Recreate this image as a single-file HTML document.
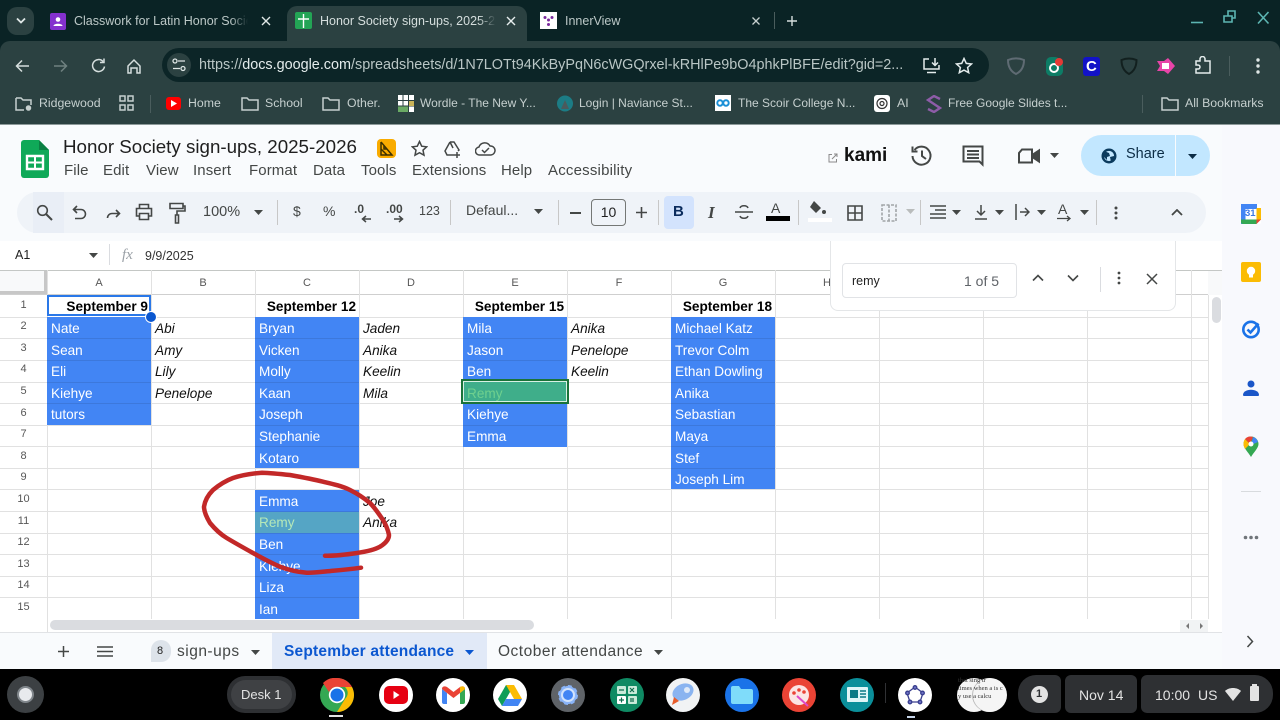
<!DOCTYPE html>
<html lang="en"><head><meta charset="utf-8"><title>Honor Society sign-ups</title>
<style>
html,body{margin:0;padding:0;width:1280px;height:720px;overflow:hidden;background:#f9fbfd;font-family:"Liberation Sans",sans-serif}
div,span,svg{position:absolute}
.t{white-space:nowrap;line-height:1}
.b{color:#c6d0cf;font-size:12.3px}
.m{color:#444746;font-size:15px;top:163px;letter-spacing:.1px}
.c{width:100px;height:21.6px;line-height:23px;font-size:13.6px;color:#000;white-space:nowrap;padding-left:4px}
.w{color:#fff}.i{font-style:italic;color:#111}
.h{font-weight:bold;text-align:right;padding:0;width:99px}
.hd{color:#575757;font-size:11px;width:104px;text-align:center;top:278px}
.rn{color:#575757;font-size:11px;width:47px;text-align:center;left:0}
.ca{left:47px}.cb{left:151px}.cc{left:255px}.cd{left:359px}.ce{left:463px}.cf{left:567px}.cg{left:671px}
.r1{top:295.4px}.r2{top:317px}.r3{top:338.6px}.r4{top:360.2px}.r5{top:381.8px}.r6{top:403.4px}.r7{top:425px}.r8{top:446.6px}.r9{top:468.2px}.r10{top:489.8px}.r11{top:511.4px}.r12{top:533px}.r13{top:554.6px}.r14{top:576.2px}.r15{top:597.8px}
.f{background:#4285f4;width:104px}
.ap{width:34px;height:34px;border-radius:50%;top:678px}
.gi{fill:none;stroke:#444746;stroke-width:1.6}
.wi{fill:none;stroke:#c6d0cf;stroke-width:1.5}
</style></head><body>

<!-- browser chrome -->
<div style="left:0;top:0;width:1280px;height:124px;background:#0a2325"></div>
<div style="left:0;top:41px;width:1280px;height:83px;background:#2b4141;border-radius:10px 10px 0 0"></div>
<div style="left:287px;top:6px;width:240px;height:37px;background:#2b4141;border-radius:10px 10px 0 0"></div>
<div style="left:7px;top:7px;width:27px;height:28px;background:#2b4141;border-radius:10px"></div>
<svg style="left:16px;top:17px" width="10" height="8"><path d="M1 1.500l4 4 4-4" fill="none" stroke="#dfe7e6" stroke-width="1.8"/></svg>
<div style="left:50px;top:13px;width:16px;height:17px;background:#8430ce;border-radius:2px"></div>
<svg style="left:50px;top:13px" width="16" height="17"><circle cx="8" cy="6.500" r="2.300" fill="#fff"/><path d="M3.500 13c0-3 9-3 9 0z" fill="#fff"/></svg>
<div class="t" style="left:74px;top:15px;font-size:12.5px;color:#bcc8c7;width:174px;overflow:hidden;-webkit-mask-image:linear-gradient(90deg,#000 90%,transparent)">Classwork for Latin Honor Society</div>
<svg style="left:261px;top:16px" width="10" height="10"><path d="M1 1l8 8M9 1l-8 8" stroke="#dfe7e6" stroke-width="1.4"/></svg>
<div style="left:295px;top:12px;width:17px;height:17px;background:#23a455;border-radius:2px"></div>
<svg style="left:295px;top:12px" width="17" height="17"><path d="M8.500 2v14M3 7h11" stroke="#fff" stroke-width="1.4"/></svg>
<div class="t" style="left:320px;top:15px;font-size:12.5px;color:#d5dedd;width:176px;overflow:hidden;-webkit-mask-image:linear-gradient(90deg,#000 90%,transparent)">Honor Society sign-ups, 2025-2026</div>
<svg style="left:506px;top:16px" width="10" height="10"><path d="M1 1l8 8M9 1l-8 8" stroke="#e6eded" stroke-width="1.4"/></svg>
<div style="left:540px;top:12px;width:17px;height:17px;background:#fff"></div>
<svg style="left:540px;top:12px" width="17" height="17"><circle cx="5" cy="5.500" r="1.500" fill="#7b2a9e"/><circle cx="12" cy="5.500" r="1.500" fill="#7b2a9e"/><circle cx="8.500" cy="8" r="1.500" fill="#7b2a9e"/><circle cx="8.500" cy="12.500" r="1.500" fill="#7b2a9e"/></svg>
<div class="t" style="left:565px;top:15px;font-size:12.5px;color:#bcc8c7">InnerView</div>
<svg style="left:751px;top:16px" width="10" height="10"><path d="M1.500 1.500l7 7M8.500 1.500l-7 7" stroke="#c6d0cf" stroke-width="1.3"/></svg>
<div style="left:774px;top:12px;width:1px;height:17px;background:#4a5d5d"></div>
<svg style="left:786px;top:15px" width="12" height="12"><path d="M6 1v10M1 6h10" stroke="#d5dedd" stroke-width="1.4"/></svg>
<svg style="left:1186px;top:6px" width="94" height="22" fill="none" stroke="#5cb5b2" stroke-width="1.6"><path d="M5 16.500h12"/><path d="M38 10h8v6h-8zM42 10V5h7v7h-3"/><path d="M72 6l10.500 11.500M82.500 6L72 17.500"/></svg>

<!-- toolbar nav -->
<svg style="left:14px;top:56px;width:130px;height:20px" viewBox="0 0 130 20" fill="none" stroke="#d5dedd" stroke-width="1.5"><path d="M15 10H3M8 4.500L2.500 10 8 15.500"/><path d="M40 10h12M47 4.500l5.500 5.500L47 15.500" stroke="#6f8180"/><path d="M89 5.500a6 6 0 1 0 1.500 5M90 2.500v4h-4"/><path d="M114 10l6-6 6 6v7h-3v-5h-6v5h-3z"/></svg>
<div style="left:162px;top:48px;width:827px;height:34px;background:#0c2527;border-radius:17px"></div>
<div style="left:167px;top:53px;width:24px;height:24px;background:#2b4141;border-radius:50%"></div>
<svg style="left:171px;top:57px" width="16" height="16" fill="none" stroke="#dfe7e6" stroke-width="1.300"><circle cx="4" cy="4" r="2"/><path d="M7 4h7M2 11.500h7"/><circle cx="12" cy="11.500" r="2"/></svg>
<div class="t" style="left:199px;top:58px;font-size:14.4px;color:#b9c6c5">https://<span style="position:static;color:#e4ecec">docs.google.com</span>/spreadsheets/d/1N7LOTt94KkByPqN6cWGQrxel-kRHlPe9bO4phkPlBFE/edit?gid=2...</div>
<svg style="left:922px;top:57px" width="20" height="18" fill="none" stroke="#e4ecec" stroke-width="1.500"><path d="M7 2H2v10h15V8M5 15.500h9M13 1v7M10 5.500l3 3 3-3"/></svg>
<svg style="left:955px;top:57px" width="18" height="17" fill="none" stroke="#e4ecec" stroke-width="1.500"><path d="M9 1.500l2.300 4.900 5.200.6-3.900 3.500 1.100 5.200L9 13.100l-4.700 2.600 1.100-5.200L1.500 7l5.200-.6z"/></svg>
<svg style="left:1006px;top:57px" width="20" height="19" fill="none" stroke="#5f6b73" stroke-width="2"><path d="M2 3c5-2 11-2 16 0 0 6-2 11-8 14C4 14 2 9 2 3z"/></svg>
<div style="left:1046px;top:57px;width:17px;height:19px;background:#0d7d66;border-radius:5px 9px 5px 5px"></div>
<svg style="left:1046px;top:57px" width="18" height="19" fill="none"><circle cx="8" cy="11" r="4" stroke="#fff" stroke-width="2"/><circle cx="13" cy="5" r="4" fill="#e53935"/></svg>
<div style="left:1083px;top:57px;width:17px;height:19px;background:#1212c8;border-radius:3px"></div>
<div class="t" style="left:1086px;top:59px;font-size:15px;font-weight:bold;color:#fff">C</div>
<svg style="left:1120px;top:57px" width="18" height="19" fill="none" stroke="#12201f" stroke-width="2"><path d="M1.500 3c5-2 10-2 15 0 0 6-2 11-7.500 14C3.500 14 1.500 9 1.500 3z"/></svg>
<svg style="left:1157px;top:58px" width="18" height="16"><path d="M0 3h7l4-3 7 8-7 8-4-3H0l3-5z" fill="#e844a8"/><rect x="5" y="5" width="7" height="6" fill="#fff"/></svg>
<svg style="left:1194px;top:56px" width="19" height="20" fill="none" stroke="#e4ecec" stroke-width="1.500"><path d="M2 5h4V3a2 2 0 0 1 5 0v2h5v12H2v-4h2a2 2 0 0 0 0-4H2z"/></svg>
<div style="left:1229px;top:56px;width:1px;height:20px;background:#4a5d5d"></div>
<svg style="left:1256px;top:58px" width="4" height="16" fill="#dfe7e6"><circle cx="2" cy="2" r="1.700"/><circle cx="2" cy="8" r="1.700"/><circle cx="2" cy="14" r="1.700"/></svg>

<!-- bookmarks -->
<svg style="left:15px;top:96px" width="18" height="16" class="wi"><path d="M1 2h5l2 2h8v5M9 14H1V2"/><circle cx="13.500" cy="12" r="2" fill="#c6d0cf"/></svg>
<div class="t b" style="left:39px;top:97px">Ridgewood</div>
<svg style="left:119px;top:95px" width="15" height="16" fill="none" stroke="#c6d0cf" stroke-width="1.500"><rect x="1" y="1" width="5" height="5"/><rect x="9" y="1" width="5" height="5"/><rect x="1" y="10" width="5" height="5"/><rect x="9" y="10" width="5" height="5"/></svg>
<div style="left:150px;top:95px;width:1px;height:18px;background:#4a5d5d"></div>
<div style="left:166px;top:97px;width:15px;height:13px;background:#f00;border-radius:3px"></div>
<svg style="left:171px;top:100px" width="6" height="7"><path d="M0 0l6 3.500L0 7z" fill="#fff"/></svg>
<div class="t b" style="left:188px;top:97px">Home</div>
<svg style="left:241px;top:96px" width="18" height="15" class="wi"><path d="M1 2h5l2 2h9v10H1z"/></svg>
<div class="t b" style="left:265px;top:97px">School</div>
<svg style="left:322px;top:96px" width="18" height="15" class="wi"><path d="M1 2h5l2 2h9v10H1z"/></svg>
<div class="t b" style="left:347px;top:97px">Other.</div>
<svg style="left:398px;top:95px" width="16" height="17"><rect width="16" height="17" fill="#fff"/><path d="M0 5.500h16M0 11h16M5 0v17M10.500 0v17" stroke="#2b4141"/><rect x="0" y="11.500" width="10" height="5.500" fill="#6aaa64"/><rect x="11" y="6" width="5" height="5" fill="#c9b458"/></svg>
<div class="t b" style="left:420px;top:97px;font-size:12px">Wordle - The New Y...</div>
<svg style="left:557px;top:95px" width="16" height="17"><circle cx="8" cy="8.500" r="8" fill="#1c7c85"/><path d="M8 5l4 9H4z" fill="#4b5a5c"/></svg>
<div class="t b" style="left:579px;top:97px;font-size:12px">Login | Naviance St...</div>
<div style="left:715px;top:95px;width:16px;height:16px;background:#fff"></div>
<svg style="left:715px;top:95px" width="16" height="16" fill="none" stroke="#1a8fd6" stroke-width="2"><circle cx="5" cy="8" r="2.700"/><circle cx="11" cy="8" r="2.700"/></svg>
<div class="t b" style="left:738px;top:97px;font-size:12px">The Scoir College N...</div>
<div style="left:874px;top:95px;width:16px;height:17px;background:#fff;border-radius:3px"></div>
<svg style="left:876px;top:97px" width="12" height="13" fill="none" stroke="#333" stroke-width="1.200"><circle cx="6" cy="6.500" r="5"/><circle cx="6" cy="6.500" r="2"/></svg>
<div class="t b" style="left:897px;top:97px">AI</div>
<svg style="left:926px;top:95px" width="16" height="18" fill="none" stroke="#8e5ca8" stroke-width="2.400"><path d="M14 4L8 1 2 5l6 4 6 4-6 4-6-3"/></svg>
<div class="t b" style="left:948px;top:97px;font-size:12px">Free Google Slides t...</div>
<div style="left:1142px;top:95px;width:1px;height:18px;background:#4a5d5d"></div>
<svg style="left:1161px;top:96px" width="18" height="15" class="wi"><path d="M1 2h5l2 2h9v10H1z"/></svg>
<div class="t b" style="left:1185px;top:97px">All Bookmarks</div>

<!-- docs header -->
<div style="left:0;top:124px;width:1280px;height:1px;background:#8d9a9a"></div>
<svg style="left:21px;top:140px" width="28" height="38"><path d="M3 0h15l10 10v25a3 3 0 0 1-3 3H3a3 3 0 0 1-3-3V3a3 3 0 0 1 3-3z" fill="#0fa958"/><path d="M18 0l10 10H18z" fill="#0b8043"/><path d="M6 16h16v13H6z" fill="none" stroke="#fff" stroke-width="2.400"/><path d="M14 16v13M6 22.500h16" stroke="#fff" stroke-width="2"/></svg>
<div class="t" style="left:63px;top:138px;font-size:18.75px;color:#1f1f1f">Honor Society sign-ups, 2025-2026</div>
<div style="left:377px;top:139px;width:19px;height:19px;background:#f9ab00;border-radius:4px"></div>
<svg style="left:379px;top:141px" width="15" height="15" fill="none" stroke="#3c3000" stroke-width="1.500"><path d="M2 1v13h11L2 1M2 8l6 6M5 5v3h3"/></svg>
<svg style="left:411px;top:140px" width="17" height="17" fill="none" stroke="#444746" stroke-width="1.500"><path d="M8.500 1.500l2.200 4.700 5 .6-3.700 3.400 1 5-4.500-2.500L4 15.200l1-5L1.300 6.800l5-.6z"/></svg>
<svg style="left:443px;top:140px" width="20" height="18" fill="none" stroke="#444746" stroke-width="1.500"><path d="M7 2h4l5 8-1 1M7 2L2 11l2 4h7M7 2l3 6M14 12v6M11 15h6"/></svg>
<svg style="left:475px;top:141px" width="21" height="16" fill="none" stroke="#444746" stroke-width="1.500"><path d="M5 14a4 4 0 0 1-1-8 6 6 0 0 1 11-1 4.500 4.500 0 0 1 1 9zM7 9l2.500 2.500L14 7"/></svg>
<div class="t m" style="left:64px">File</div><div class="t m" style="left:103px">Edit</div><div class="t m" style="left:146px">View</div><div class="t m" style="left:193px">Insert</div><div class="t m" style="left:249px">Format</div><div class="t m" style="left:313px">Data</div><div class="t m" style="left:361px">Tools</div><div class="t m" style="left:412px">Extensions</div><div class="t m" style="left:501px">Help</div><div class="t m" style="left:548px;letter-spacing:.2px">Accessibility</div>

<svg style="left:828px;top:153px" width="10" height="10" fill="none" stroke="#8a8a8a"><path d="M4 1.500H1v7.500h7.500V6M4 6l5-5M6 1h3v3"/></svg>
<div class="t" style="left:844px;top:146px;font-size:19px;font-weight:bold;color:#111">kami</div>
<svg style="left:910px;top:144px" width="23" height="23" fill="none" stroke="#444746" stroke-width="2"><path d="M4.500 6a9 9 0 1 1-2 6M2.500 2.500v5h5M12 6.500V12l4 3"/></svg>
<svg style="left:962px;top:145px" width="23" height="22" fill="none" stroke="#444746" stroke-width="2"><path d="M1.500 1.500h19v18l-3-3h-16zM5 6h12M5 9.500h12M5 13h12"/></svg>
<svg style="left:1018px;top:148px" width="22" height="16" fill="none" stroke="#444746" stroke-width="2"><path d="M4 1.500h10v13H1V5z"/><path d="M15 6.500l6-4v11l-6-4z" fill="#444746"/></svg>
<svg style="left:1050px;top:153px" width="9" height="5"><path d="M0 0h9L4.500 5z" fill="#444746"/></svg>
<div style="left:1081px;top:135px;width:129px;height:41px;background:#c2e7ff;border-radius:21px"></div>
<div style="left:1175px;top:135px;width:1px;height:41px;background:#f9fbfd"></div>
<svg style="left:1101px;top:148px" width="16" height="16"><circle cx="8" cy="8" r="6.300" fill="none" stroke="#0b3b5e" stroke-width="2.400"/><path d="M3 3l5 2 1 3-3 1v3L2 8zM9 9l4-1 1 2-4 4z" fill="#0b3b5e"/></svg>
<div class="t" style="left:1126px;top:147px;font-size:14.5px;color:#0b2c45">Share</div>
<svg style="left:1188px;top:154px" width="9" height="5"><path d="M0 0h9L4.500 5z" fill="#0b2c45"/></svg>
<div style="left:1227px;top:142px;width:32px;height:32px;border-radius:50%;background:#ecebe4"></div>
<svg style="left:1232px;top:144px" width="26" height="28" fill="none"><path d="M12 20l12-14 1 13-8 7z" fill="#e8e08a"/><path d="M10 8v13a3 3 0 0 0 6 0V5a3 3 0 0 0-5 0" stroke="#777" stroke-width="1.500"/><circle cx="10" cy="5" r="1.500" fill="#333"/><circle cx="15" cy="5" r="1.500" fill="#333"/></svg>

<!-- toolbar -->
<div style="left:17px;top:192px;width:1189px;height:41px;background:#eff3f8;border-radius:21px"></div>
<div style="left:33px;top:192px;width:31px;height:41px;background:#e9eef6"></div>
<svg style="left:36px;top:204px" width="17" height="17" class="gi"><circle cx="6.500" cy="6.500" r="4.800"/><path d="M10 10l6 6" stroke-width="2"/></svg>
<svg style="left:72px;top:205px" width="16" height="15" class="gi"><path d="M5 1L1.500 4.500 5 8M2 4.500h7a4.500 4.500 0 0 1 0 9H3"/></svg>
<svg style="left:105px;top:205px" width="16" height="15" class="gi"><path d="M11 5l3.500 3.500L11 12M14 8.500H7a4.500 4.500 0 0 0-4.500 4.500"/></svg>
<svg style="left:135px;top:203px" width="18" height="18" class="gi"><path d="M4.500 5V1.500h9V5M4.500 13H1.500V5.500h15V13h-3M4.500 10.500h9v6h-9z"/></svg>
<svg style="left:169px;top:202px" width="17" height="22" class="gi"><path d="M1 1.500h13v5H1zM14 4h2v5H8v4M6.500 13h3v8h-3z"/></svg>
<div class="t" style="left:203px;top:205px;font-size:14.5px;color:#444746">100%</div>
<svg style="left:254px;top:210px" width="9" height="5"><path d="M0 0h9L4.500 5z" fill="#444746"/></svg>
<div style="left:277px;top:200px;width:1px;height:25px;background:#c7c7c7"></div>
<div class="t" style="left:293px;top:204px;font-size:14px;color:#444746">$</div>
<div class="t" style="left:323px;top:204px;font-size:14px;color:#444746">%</div>
<div class="t" style="left:354px;top:203px;font-size:12px;font-weight:bold;color:#444746">.0</div>
<svg style="left:361px;top:215px" width="10" height="8"><path d="M10 4H2M5 1L1.500 4 5 7" fill="none" stroke="#444746" stroke-width="1.500"/></svg>
<div class="t" style="left:386px;top:203px;font-size:12px;font-weight:bold;color:#444746">.00</div>
<svg style="left:394px;top:215px" width="10" height="8"><path d="M0 4h8M5 1l3.500 3L5 7" fill="none" stroke="#444746" stroke-width="1.500"/></svg>
<div class="t" style="left:419px;top:205px;font-size:12.5px;color:#444746">123</div>
<div style="left:450px;top:200px;width:1px;height:25px;background:#c7c7c7"></div>
<div class="t" style="left:466px;top:203px;font-size:14px;color:#444746">Defaul...</div>
<svg style="left:534px;top:209px" width="9" height="5"><path d="M0 0h9L4.500 5z" fill="#444746"/></svg>
<div style="left:558px;top:200px;width:1px;height:25px;background:#c7c7c7"></div>
<div style="left:570px;top:212px;width:11px;height:1.600px;background:#444746"></div>
<div class="t" style="left:591px;top:199px;width:33px;height:25px;border:1px solid #747775;border-radius:4px;text-align:center;line-height:25px;font-size:14px;color:#1f1f1f">10</div>
<svg style="left:636px;top:207px" width="11" height="11"><path d="M5.500 0v11M0 5.500h11" stroke="#444746" stroke-width="1.600"/></svg>
<div style="left:658px;top:200px;width:1px;height:25px;background:#c7c7c7"></div>
<div style="left:664px;top:196px;width:30px;height:33px;background:#d3e3fd;border-radius:4px"></div>
<div class="t" style="left:673px;top:204px;font-size:15px;font-weight:bold;color:#0b2c5e">B</div>
<div class="t" style="left:708px;top:204px;font-size:17px;font-style:italic;font-family:'Liberation Serif',serif;font-weight:bold;color:#444746">I</div>
<svg style="left:735px;top:204px" width="18" height="16" fill="none" stroke="#444746" stroke-width="1.500"><path d="M0 8h18M13 4c-1-3-7-3-8 0M5 12c1 3 7 3 8 0"/></svg>
<div class="t" style="left:771px;top:201px;font-size:14px;color:#444746">A</div>
<div style="left:766px;top:216px;width:24px;height:5px;background:#000"></div>
<div style="left:798px;top:200px;width:1px;height:25px;background:#c7c7c7"></div>
<svg style="left:808px;top:200px" width="20" height="16"><path d="M6 1l7 7-5 5-6-6z" fill="#444746"/><circle cx="16" cy="12" r="2" fill="#444746"/></svg>
<div style="left:808px;top:218px;width:24px;height:4px;background:#fff"></div>
<svg style="left:847px;top:205px" width="16" height="16" class="gi"><path d="M1 1h14v14H1zM8 1v14M1 8h14"/></svg>
<svg style="left:881px;top:204px;opacity:.45" width="16" height="18" class="gi" stroke-dasharray="3 1.500"><path d="M1 1h14v16H1zM8 1v16"/></svg>
<svg style="left:906px;top:209px" width="9" height="5"><path d="M0 0h9L4.500 5z" fill="#b9bcbc"/></svg>
<div style="left:920px;top:200px;width:1px;height:25px;background:#c7c7c7"></div>
<svg style="left:930px;top:205px" width="16" height="15" stroke="#444746" stroke-width="1.500"><path d="M0 1h16M5 5h11M0 9h16M0 13h16"/></svg>
<svg style="left:952px;top:210px" width="9" height="5"><path d="M0 0h9L4.500 5z" fill="#444746"/></svg>
<svg style="left:974px;top:205px" width="14" height="15" fill="none" stroke="#444746" stroke-width="1.500"><path d="M7 0v9M3 6l4 4 4-4M1 14h12"/></svg>
<svg style="left:995px;top:210px" width="9" height="5"><path d="M0 0h9L4.500 5z" fill="#444746"/></svg>
<svg style="left:1015px;top:204px" width="15" height="16" fill="none" stroke="#444746" stroke-width="1.500"><path d="M1 0v16M5 8h9M10 4l4 4-4 4"/></svg>
<svg style="left:1037px;top:210px" width="9" height="5"><path d="M0 0h9L4.500 5z" fill="#444746"/></svg>
<div class="t" style="left:1058px;top:202px;font-size:14px;color:#444746">A</div>
<svg style="left:1057px;top:215px" width="15" height="7" fill="none" stroke="#444746" stroke-width="1.300"><path d="M0 3.500h13M10 1l3 2.500L10 6"/></svg>
<svg style="left:1080px;top:210px" width="9" height="5"><path d="M0 0h9L4.500 5z" fill="#444746"/></svg>
<div style="left:1096px;top:200px;width:1px;height:25px;background:#c7c7c7"></div>
<svg style="left:1114px;top:206px" width="4" height="14" fill="#444746"><circle cx="2" cy="2" r="1.500"/><circle cx="2" cy="7" r="1.500"/><circle cx="2" cy="12" r="1.500"/></svg>
<svg style="left:1171px;top:209px" width="12" height="7"><path d="M1 6l5-5 5 5" fill="none" stroke="#444746" stroke-width="1.800"/></svg>

<!-- grid surface -->
<div style="left:0;top:241px;width:1222px;height:391px;background:#fff"></div>
<div class="t" style="left:15px;top:249px;font-size:12.5px;color:#1f1f1f">A1</div>
<svg style="left:89px;top:253px" width="9" height="5"><path d="M0 0h9L4.500 5z" fill="#444746"/></svg>
<div style="left:109px;top:244px;width:1px;height:21px;background:#dadce0"></div>
<div class="t" style="left:122px;top:248px;font-size:15px;font-style:italic;font-family:'Liberation Serif',serif;color:#9aa0a6">fx</div>
<div class="t" style="left:145px;top:250px;font-size:12.5px;color:#333">9/9/2025</div>
<div style="left:0;top:270px;width:1222px;height:1px;background:#c4c7c5"></div>

<div style="left:0;top:271px;width:44px;height:20px;background:#f8f9fa"></div>
<div style="left:44px;top:271px;width:3px;height:24px;background:#c7c7c7"></div>
<div style="left:0;top:291px;width:47px;height:4px;background:#c7c7c7"></div>

<!-- grid lines -->
<svg style="left:0;top:270px" width="1222" height="350" stroke="#e1e1e1" stroke-width="1" shape-rendering="crispEdges">
<path d="M0 47.500H1208M0 68.500H1208M0 90.500H1208M0 112.500H1208M0 133.500H1208M0 155.500H1208M0 176.500H1208M0 198.500H1208M0 219.500H1208M0 241.500H1208M0 263.500H1208M0 284.500H1208M0 306.500H1208M0 327.500H1208"/>
<path d="M0 24.500H1208" stroke="#cfcfcf"/>
<path d="M47.500 0V349M151.500 0V349M255.500 0V349M359.500 0V349M463.500 0V349M567.500 0V349M671.500 0V349M775.500 0V349M879.500 0V349M983.500 0V349M1087.500 0V349M1191.500 0V349"/>
</svg>

<div class="t hd" style="left:47px">A</div><div class="t hd" style="left:151px">B</div><div class="t hd" style="left:255px">C</div><div class="t hd" style="left:359px">D</div><div class="t hd" style="left:463px">E</div><div class="t hd" style="left:567px">F</div><div class="t hd" style="left:671px">G</div><div class="t hd" style="left:775px">H</div>
<div class="t rn" style="top:300px">1</div><div class="t rn" style="top:321px">2</div><div class="t rn" style="top:343px">3</div><div class="t rn" style="top:364px">4</div><div class="t rn" style="top:386px">5</div><div class="t rn" style="top:408px">6</div><div class="t rn" style="top:429px">7</div><div class="t rn" style="top:451px">8</div><div class="t rn" style="top:472px">9</div><div class="t rn" style="top:494px">10</div><div class="t rn" style="top:516px">11</div><div class="t rn" style="top:537px">12</div><div class="t rn" style="top:559px">13</div><div class="t rn" style="top:580px">14</div><div class="t rn" style="top:602px">15</div>

<!-- fills -->
<div class="f" style="left:47px;top:317px;height:108px"></div>
<div class="f" style="left:255px;top:317px;height:151px"></div>
<div class="f" style="left:255px;top:490px;height:129px"></div>
<div class="f" style="left:463px;top:317px;height:130px"></div>
<div class="f" style="left:671px;top:317px;height:172px"></div>
<svg style="left:0;top:317px" width="780" height="303" stroke="#3c78dc" shape-rendering="crispEdges"><path d="M47 21.500h104M47 43.500h104M47 65.500h104M47 86.500h104M255 21.500h104M255 43.500h104M255 65.500h104M255 86.500h104M255 108.500h104M255 129.500h104M255 194.500h104M255 216.500h104M255 237.500h104M255 259.500h104M255 280.500h104M463 21.500h104M463 43.500h104M463 65.500h104M463 86.500h104M463 108.500h104M671 21.500h104M671 43.500h104M671 65.500h104M671 86.500h104M671 108.500h104M671 129.500h104M671 151.500h104"/></svg>
<div style="left:255px;top:512px;width:104px;height:21px;background:#55a5c5"></div>
<div style="left:461px;top:379px;width:108px;height:25px;background:#3fae8a"></div>
<div style="left:461px;top:379px;width:104px;height:21px;border:2px solid #1a7339"></div>
<div style="left:463px;top:381px;width:102px;height:19px;border:1px solid #d8f0e4"></div>

<!-- A1 selection -->
<div style="left:47px;top:295px;width:104px;height:21px;border:2px solid #2a78e8;box-sizing:border-box"></div>
<div style="left:146px;top:312px;width:10px;height:10px;background:#0b57d0;border-radius:50%;box-shadow:0 0 0 1px #fff"></div>

<!-- cell text -->
<div class="c h ca r1" style="left:49px">September 9</div>
<div class="c w ca r2">Nate</div><div class="c w ca r3">Sean</div><div class="c w ca r4">Eli</div><div class="c w ca r5">Kiehye</div><div class="c w ca r6">tutors</div>
<div class="c i cb r2">Abi</div><div class="c i cb r3">Amy</div><div class="c i cb r4">Lily</div><div class="c i cb r5">Penelope</div>
<div class="c h cc r1" style="left:257px">September 12</div>
<div class="c w cc r2">Bryan</div><div class="c w cc r3">Vicken</div><div class="c w cc r4">Molly</div><div class="c w cc r5">Kaan</div><div class="c w cc r6">Joseph</div><div class="c w cc r7">Stephanie</div><div class="c w cc r8">Kotaro</div>
<div class="c w cc r10">Emma</div><div class="c cc r11" style="color:#b5e8b8">Remy</div><div class="c w cc r12">Ben</div><div class="c w cc r13">Kiehye</div><div class="c w cc r14">Liza</div><div class="c w cc r15">Ian</div>
<div class="c i cd r2">Jaden</div><div class="c i cd r3">Anika</div><div class="c i cd r4">Keelin</div><div class="c i cd r5">Mila</div><div class="c i cd r10">Joe</div><div class="c i cd r11">Anika</div>
<div class="c h ce r1" style="left:465px">September 15</div>
<div class="c w ce r2">Mila</div><div class="c w ce r3">Jason</div><div class="c w ce r4">Ben</div><div class="c ce r5" style="color:#6fd08e">Remy</div><div class="c w ce r6">Kiehye</div><div class="c w ce r7">Emma</div>
<div class="c i cf r2">Anika</div><div class="c i cf r3">Penelope</div><div class="c i cf r4">Keelin</div>
<div class="c h cg r1" style="left:673px">September 18</div>
<div class="c w cg r2">Michael Katz</div><div class="c w cg r3">Trevor Colm</div><div class="c w cg r4">Ethan Dowling</div><div class="c w cg r5">Anika</div><div class="c w cg r6">Sebastian</div><div class="c w cg r7">Maya</div><div class="c w cg r8">Stef</div><div class="c w cg r9">Joseph Lim</div>

<!-- scrollbars -->
<div style="left:1208px;top:271px;width:14px;height:348px;background:#fff;border-left:1px solid #e1e1e1;box-sizing:border-box"></div>
<div style="left:1208px;top:271px;width:14px;height:24px;background:#f8f9fa"></div>
<div style="left:1212px;top:297px;width:9px;height:26px;background:#dadce0;border-radius:5px"></div>
<div style="left:0;top:619px;width:1222px;height:13px;background:#fff"></div>
<div style="left:50px;top:620px;width:484px;height:10px;background:#dadce0;border-radius:5px"></div>
<div style="left:47px;top:619px;width:1px;height:13px;background:#e1e1e1"></div>
<div style="left:1180px;top:620px;width:28px;height:12px;background:#f1f3f4"></div>
<svg style="left:1185px;top:622px" width="20" height="8" fill="#777"><path d="M4 1v6L1 4zM15 1v6l3-3z"/></svg>

<!-- find box -->
<div style="left:830px;top:241px;width:346px;height:70px;background:#fff;border:1px solid #e4e6e8;border-top:0;border-radius:0 0 8px 8px;box-sizing:border-box"></div>
<div style="left:842px;top:263px;width:175px;height:35px;border:1px solid #e1e3e6;border-radius:4px;box-sizing:border-box"></div>
<div class="t" style="left:852px;top:275px;font-size:12.5px;color:#1f1f1f">remy</div>
<div class="t" style="left:964px;top:274px;font-size:14px;color:#5f6368">1 of 5</div>
<svg style="left:1032px;top:274px" width="12" height="8"><path d="M1 6.500l5-5 5 5" fill="none" stroke="#444746" stroke-width="1.600"/></svg>
<svg style="left:1067px;top:274px" width="12" height="8"><path d="M1 1.500l5 5 5-5" fill="none" stroke="#444746" stroke-width="1.600"/></svg>
<div style="left:1100px;top:267px;width:1px;height:25px;background:#dadce0"></div>
<svg style="left:1117px;top:271px" width="4" height="14" fill="#444746"><circle cx="2" cy="2" r="1.400"/><circle cx="2" cy="7" r="1.400"/><circle cx="2" cy="12" r="1.400"/></svg>
<svg style="left:1146px;top:273px" width="12" height="12"><path d="M1 1l10 10M11 1L1 11" stroke="#444746" stroke-width="1.500"/></svg>

<!-- red annotation -->
<svg style="left:0;top:0" width="1280" height="720" fill="none" stroke="#c22828" stroke-width="4.500" stroke-linecap="round" stroke-linejoin="round"><path d="M325 555.700C336 556 347 554.500 357 553C367 551.500 375 549.500 380 546.700C386 543 389 539.500 389 535C388 530 386 525 383 520C379 514 375 508 370 503C364 498 358 494 350 490C342 486 333 484 323 481.700C312 479 301 477 290 475C281 474 271 473 262 472.700C252 473.500 242 475 233 478C225 481 219 485 213 490C208 495 205 500 204 506.700C204 512 207 518 210 523C215 529 220 534 226.700 538C235 543 244 548 253 553C262 558 271 563 280 566.700C289 570 298 572 306.700 572.700C315 573 324 571.500 333 570.700C342 570 352 569 361 567.700"/></svg>

<!-- side panel -->
<div style="left:1222px;top:125px;width:58px;height:544px;background:#f8f9fd"></div>
<svg style="left:1241px;top:204px" width="20" height="20"><rect width="20" height="20" rx="2" fill="#fff"/><path d="M0 5V2a2 2 0 0 1 2-2h14v5z" fill="#4285f4"/><rect width="4.500" height="20" fill="#4285f4"/><rect x="15.500" y="4" width="4.500" height="12" fill="#fbbc04"/><path d="M0 15.500h15.500V20H2a2 2 0 0 1-2-2z" fill="#34a853"/><path d="M15.500 15.500H20L15.500 20z" fill="#ea4335"/></svg>
<div class="t" style="left:1245px;top:209px;font-size:9.5px;font-weight:bold;color:#3b78e7">31</div>
<div style="left:1241px;top:262px;width:20px;height:20px;background:#fbbc04;border-radius:2px"></div>
<svg style="left:1241px;top:262px" width="20" height="20"><circle cx="10" cy="9" r="4.200" fill="#fff"/><rect x="8" y="12" width="4" height="3.500" fill="#fff"/></svg>
<svg style="left:1241px;top:319px" width="20" height="20" fill="none" stroke="#1a73e8" stroke-width="2.600"><circle cx="10" cy="10.500" r="7.700"/><path d="M6.500 10.500l3 3 8-9"/></svg>
<svg style="left:1243px;top:378px" width="16" height="20" fill="#1a56c8"><circle cx="8" cy="6" r="3.500"/><path d="M0 19c0-7 16-7 16 0a1 1 0 0 1-1 1H1a1 1 0 0 1-1-1z" transform="translate(0,-2)"/></svg>
<svg style="left:1243px;top:436px" width="16" height="22"><path d="M8 21C5 16 .5 12 .5 8a7.500 7.500 0 0 1 15 0c0 4-4.500 8-7.500 13z" fill="#34a853"/><path d="M2 3l5 5-5 5C1 11 .5 9.500 .5 8 .5 6 1 4.500 2 3z" fill="#fbbc04"/><path d="M2 3a7.500 7.500 0 0 1 8-2L7 8z" fill="#ea4335"/><path d="M10 1a7.500 7.500 0 0 1 5 5L8 9z" fill="#4285f4"/><circle cx="8" cy="8" r="2.500" fill="#fff"/></svg>
<div style="left:1241px;top:491px;width:20px;height:1px;background:#d8dbde"></div>
<svg style="left:1243px;top:535px" width="16" height="5" fill="#70757a"><circle cx="2.500" cy="2.500" r="1.800"/><circle cx="8" cy="2.500" r="1.800"/><circle cx="13.500" cy="2.500" r="1.800"/></svg>
<svg style="left:1246px;top:635px" width="8" height="13"><path d="M1.500 1l5 5.500-5 5.500" fill="none" stroke="#444746" stroke-width="1.500"/></svg>

<!-- sheet tabs -->
<div style="left:0;top:632px;width:1222px;height:37px;background:#f9fbfd;border-top:1px solid #e1e3e6;box-sizing:border-box"></div>
<svg style="left:57px;top:645px" width="13" height="13"><path d="M6.500 1v11M1 6.500h11" stroke="#444746" stroke-width="1.500"/></svg>
<svg style="left:97px;top:645px" width="16" height="13" stroke="#444746" stroke-width="1.600"><path d="M0 2h16M0 6.500h16M0 11h16"/></svg>
<div style="left:151px;top:640px;width:20px;height:22px;background:#dde3ea;border-radius:10px 10px 10px 0"></div>
<div class="t" style="left:157px;top:646px;font-size:11px;color:#1f1f1f">8</div>
<div class="t" style="left:177px;top:644px;font-size:15.5px;color:#444746;letter-spacing:.5px">sign-ups</div>
<svg style="left:251px;top:650px" width="9" height="5"><path d="M0 0h9L4.500 5z" fill="#444746"/></svg>
<div style="left:272px;top:633px;width:215px;height:36px;background:#e1e9f7"></div>
<div class="t" style="left:284px;top:644px;font-size:15.5px;font-weight:bold;color:#0b57d0;letter-spacing:.2px">September attendance</div>
<svg style="left:465px;top:650px" width="9" height="5"><path d="M0 0h9L4.500 5z" fill="#0b57d0"/></svg>
<div class="t" style="left:498px;top:644px;font-size:15.5px;color:#444746;letter-spacing:.5px">October attendance</div>
<svg style="left:654px;top:650px" width="9" height="5"><path d="M0 0h9L4.500 5z" fill="#444746"/></svg>

<!-- ChromeOS shelf -->
<div style="left:0;top:669px;width:1280px;height:51px;background:#000"></div>
<div style="left:7px;top:676px;width:37px;height:37px;border-radius:50%;background:#3c4043"></div>
<div style="left:17px;top:686px;width:13px;height:13px;border-radius:50%;background:#e8eaed;border:2px solid #80868b"></div>
<div style="left:227px;top:676px;width:69px;height:37px;border-radius:18px;background:#2e3033"></div>
<div style="left:231px;top:680px;width:61px;height:29px;border-radius:15px;background:#3f4144"></div>
<div class="t" style="left:241px;top:688px;font-size:13px;color:#e3e3e3">Desk 1</div>

<svg style="left:320px;top:678px" width="34" height="34"><circle cx="17" cy="17" r="17" fill="#34a853"/><path d="M17 0a17 17 0 0 1 15 9H17a8 8 0 0 0-8 5L3 5A17 17 0 0 1 17 0z" fill="#ea4335"/><path d="M32 9a17 17 0 0 1-15 25l8-13a8 8 0 0 0 0-12z" fill="#fbbc04"/><circle cx="17" cy="17" r="8.200" fill="#fff"/><circle cx="17" cy="17" r="6.500" fill="#1a73e8"/></svg>
<div style="left:329px;top:715px;width:14px;height:2px;background:#e3e3e3"></div>
<div class="ap" style="left:379px;background:#fff"></div>
<svg style="left:384px;top:685px" width="24" height="20"><rect y="1" width="24" height="18" rx="5" fill="#e60012"/><path d="M9.500 6l6 4-6 4z" fill="#fff"/></svg>
<div class="ap" style="left:436px;background:#fff"></div>
<svg style="left:442px;top:686px" width="23" height="18"><path d="M0 3v13a2 2 0 0 0 2 2h3V7z" fill="#4285f4"/><path d="M23 3v13a2 2 0 0 1-2 2h-3V7z" fill="#34a853"/><path d="M0 3c0-3 3-3 5-2l6.500 5L18 1c2-1 5-1 5 2l-5 4-6.500 5L5 7z" fill="#ea4335"/><path d="M18 1c2-1 5-1 5 2l-5 4z" fill="#fbbc04"/></svg>
<div class="ap" style="left:493px;background:#fff"></div>
<svg style="left:498px;top:685px" width="24" height="21"><path d="M8 0h8L8 14 4 21 0 14z" fill="#0f9d58"/><path d="M8 0h8l8 14h-8z" fill="#fbbc04"/><path d="M4 21l4-7h16l-4 7z" fill="#4285f4"/></svg>
<div class="ap" style="left:551px;background:#5f6368"></div>
<svg style="left:556px;top:683px" width="24" height="24"><circle cx="12" cy="12" r="9" fill="#8ab4f8" stroke="#8ab4f8" stroke-width="2" stroke-dasharray="4 3"/><circle cx="12" cy="12" r="7" fill="#d2e3fc"/><circle cx="12" cy="12" r="5" fill="#4285f4"/></svg>
<div class="ap" style="left:610px;background:#0f8a63"></div>
<svg style="left:617px;top:686px" width="20" height="18"><rect width="9" height="8" rx="1" fill="#c8ead9"/><rect x="11" width="9" height="8" rx="1" fill="#c8ead9"/><rect y="10" width="9" height="8" rx="1" fill="#fff"/><rect x="11" y="10" width="9" height="8" rx="1" fill="#c8ead9"/><path d="M2 4h5M13 2l4 4M17 2l-4 4M2 14h5M4.500 11.500v5M13 13h4M13 15h4" stroke="#0f6b4d" stroke-width="1.200"/></svg>
<div class="ap" style="left:666px;background:#f1f3f4"></div>
<svg style="left:670px;top:682px" width="26" height="26"><ellipse cx="13" cy="10" rx="11" ry="8" fill="#8ab4f0" transform="rotate(-25 13 10)"/><path d="M4 15l-2 8 7-4z" fill="#e85c2a"/><circle cx="17" cy="8" r="3" fill="#dfeaf8"/></svg>
<div class="ap" style="left:725px;background:#1a73e8"></div>
<svg style="left:731px;top:686px" width="22" height="18"><path d="M0 2a2 2 0 0 1 2-2h6l2 3h10a2 2 0 0 1 2 2v11a2 2 0 0 1-2 2H2a2 2 0 0 1-2-2z" fill="#7fdcfa"/></svg>
<div class="ap" style="left:782px;background:#ea4335"></div>
<svg style="left:788px;top:684px" width="23" height="23"><circle cx="11" cy="11" r="10" fill="#fce4e4"/><circle cx="6" cy="9" r="1.800" fill="#ea4335"/><circle cx="11" cy="6" r="1.800" fill="#ea4335"/><circle cx="16" cy="8" r="1.800" fill="#ea4335"/><path d="M9 12l11 10" stroke="#e048c8" stroke-width="2"/></svg>
<div class="ap" style="left:840px;background:#0b8f9a"></div>
<svg style="left:846px;top:686px" width="23" height="18"><rect x="1" y="1" width="21" height="15" rx="1" fill="#dff5f7"/><rect x="4" y="4" width="8" height="8" fill="#0b7a85"/><path d="M14 5h6M14 8h6M14 11h6" stroke="#0b7a85" stroke-width="1.500"/></svg>
<div style="left:885px;top:683px;width:1px;height:20px;background:#303134"></div>
<div class="ap" style="left:898px;background:#fff"></div>
<svg style="left:905px;top:685px" width="20" height="20" fill="none" stroke="#3a3f8f" stroke-width="1.300"><path d="M10 2l8 6-3 9H5L2 8z"/><circle cx="10" cy="2.500" r="1.800" fill="#6c71c4"/><circle cx="17.500" cy="8" r="1.800" fill="#6c71c4"/><circle cx="15" cy="17" r="1.800" fill="#6c71c4"/><circle cx="5" cy="17" r="1.800" fill="#6c71c4"/><circle cx="2.500" cy="8" r="1.800" fill="#6c71c4"/></svg>
<div style="left:907px;top:716px;width:8px;height:2px;background:#c5d4e8"></div>
<div class="ap" style="left:957px;background:#f5f5f5"></div>
<div class="ap" style="left:973px;background:#f5f5f5;box-shadow:-1px 0 0 #bbb"></div>
<div class="t" style="left:958px;top:677px;font-size:6.5px;font-family:'Liberation Serif',serif;color:#333;width:50px;line-height:8px;overflow:hidden;height:26px">that sing tr<br>times when a is c<br>y use a calcu</div>
<div style="left:1018px;top:675px;width:43px;height:38px;background:#2e3033;border-radius:18px 6px 6px 18px"></div>
<div style="left:1031px;top:686px;width:17px;height:17px;border-radius:50%;background:#e3e3e3"></div>
<div class="t" style="left:1036px;top:689px;font-size:11px;font-weight:bold;color:#2e3033">1</div>
<div style="left:1065px;top:675px;width:72px;height:38px;background:#2e3033;border-radius:6px"></div>
<div class="t" style="left:1079px;top:688px;font-size:14px;color:#e3e3e3">Nov 14</div>
<div style="left:1141px;top:675px;width:132px;height:38px;background:#2e3033;border-radius:6px 18px 18px 6px"></div>
<div class="t" style="left:1155px;top:688px;font-size:14px;color:#e3e3e3">10:00</div>
<div class="t" style="left:1198px;top:688px;font-size:14px;color:#e3e3e3">US</div>
<svg style="left:1225px;top:688px" width="16" height="13"><path d="M0 3c4-4 12-4 16 0L8 13z" fill="#e3e3e3"/></svg>
<div style="left:1250px;top:686px;width:9px;height:15px;background:#e3e3e3;border-radius:1px"></div>
<div style="left:1252px;top:684px;width:5px;height:2px;background:#e3e3e3"></div>

</body></html>
